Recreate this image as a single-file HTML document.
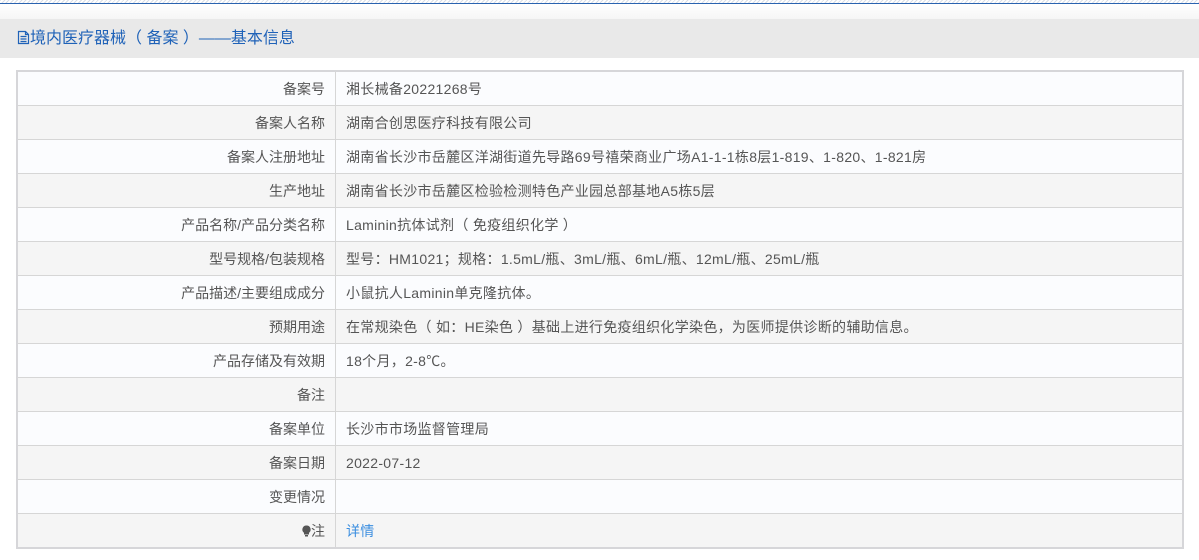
<!DOCTYPE html>
<html><head><meta charset="utf-8"><style>
body{margin:0;width:1199px;height:560px;background:#fff;font-family:"Liberation Sans","Noto Sans CJK SC",sans-serif;overflow:hidden;position:relative}
.top{position:absolute;left:0;top:0;width:1199px;height:4px;background:repeating-linear-gradient(135deg,#d8dde6 0 1px,#fff 1px 3px)}
.top:after{content:"";position:absolute;left:0;bottom:0;width:100%;height:1px;background:#2a63b0}
.fade{position:absolute;top:4px;left:0;width:1199px;height:15px;background:linear-gradient(#fff,#f6f6f6)}
.hd{position:absolute;left:0;top:19px;width:1199px;height:39px;background:#e9e9e9;color:#1f62b8;font-size:16px;line-height:40px}
.hd span{position:absolute;left:17px}
table{position:absolute;left:16px;top:70px;width:1168px;border-collapse:collapse;border:2px solid #d6d6d9;font-size:14px;color:#555}
td{border:1px solid #d6d6d6;height:33px;padding:0 10px}
td.l{width:297px;text-align:right}
td+td{letter-spacing:0.3px}
tr:nth-child(odd){background:#fbfcfe}
tr:nth-child(even){background:#f5f5f5}
a{color:#3b8ee0;text-decoration:none}
</style></head><body>
<div class="top"></div><div class="fade"></div>
<div class="hd"><span><svg width="13" height="15" viewBox="0 0 13 15" style="vertical-align:-2px"><path d="M1.5 1.5h7l3 3v9h-10z M8.5 1.5v3h3 M3.5 6.5h6 M3.5 9h6 M3.5 11.5h6" fill="none" stroke="#1f62b8" stroke-width="1.2"/></svg>境内医疗器械（ 备案 ）——基本信息</span></div>
<table>
<tr><td class="l">备案号</td><td>湘长械备20221268号</td></tr>
<tr><td class="l">备案人名称</td><td>湖南合创思医疗科技有限公司</td></tr>
<tr><td class="l">备案人注册地址</td><td>湖南省长沙市岳麓区洋湖街道先导路69号禧荣商业广场A1-1-1栋8层1-819、1-820、1-821房</td></tr>
<tr><td class="l">生产地址</td><td>湖南省长沙市岳麓区检验检测特色产业园总部基地A5栋5层</td></tr>
<tr><td class="l">产品名称/产品分类名称</td><td>Laminin抗体试剂（ 免疫组织化学 ）</td></tr>
<tr><td class="l">型号规格/包装规格</td><td>型号：HM1021；规格：1.5mL/瓶、3mL/瓶、6mL/瓶、12mL/瓶、25mL/瓶</td></tr>
<tr><td class="l">产品描述/主要组成成分</td><td>小鼠抗人Laminin单克隆抗体。</td></tr>
<tr><td class="l">预期用途</td><td>在常规染色（ 如：HE染色 ）基础上进行免疫组织化学染色，为医师提供诊断的辅助信息。</td></tr>
<tr><td class="l">产品存储及有效期</td><td>18个月，2-8℃。</td></tr>
<tr><td class="l">备注</td><td></td></tr>
<tr><td class="l">备案单位</td><td>长沙市市场监督管理局</td></tr>
<tr><td class="l">备案日期</td><td>2022-07-12</td></tr>
<tr><td class="l">变更情况</td><td></td></tr>
<tr><td class="l"><svg width="9" height="12" viewBox="0 0 9 12" style="vertical-align:-1px"><path d="M4.5 0.5a4 4 0 0 1 2.5 7.2v1.8h-5v-1.8a4 4 0 0 1 2.5-7.2z" fill="#555"/><rect x="3" y="10" width="3" height="1.5" fill="#555"/></svg>注</td><td><a>详情</a></td></tr>
</table>
</body></html>
